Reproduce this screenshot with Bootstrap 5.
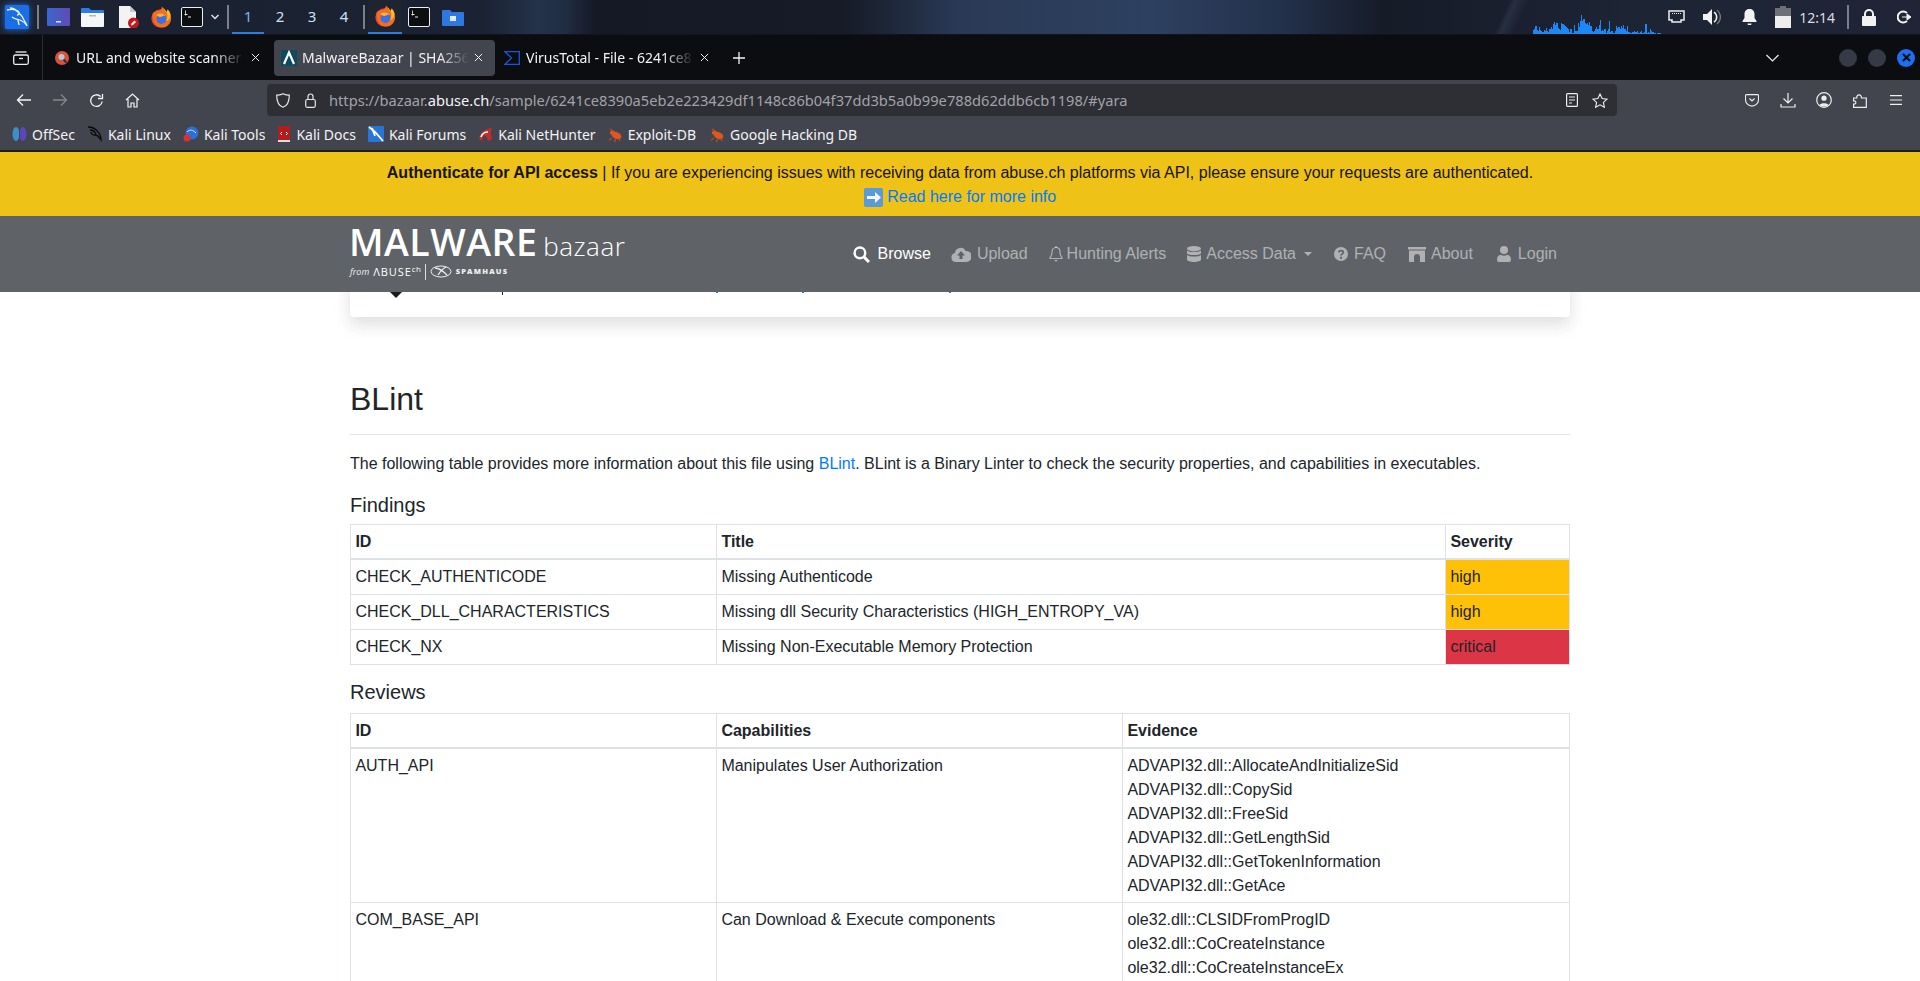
<!DOCTYPE html>
<html lang="en">
<head>
    <meta charset="UTF-8">
    <meta name="viewport" content="width=device-width, initial-scale=1.0">
    <title>MalwareBazaar | SHA256</title>
    <link href="https://cdn.jsdelivr.net/npm/bootstrap@5.3.0/dist/css/bootstrap.min.css" rel="stylesheet">
    <style>
        html, body { height: 100%; }
        body { font-family: "Liberation Sans", Arial, sans-serif; color: #212529; background: #fff; overflow: hidden; }

        /* small left margins for the panel and toolbar icons */
        .lm2 { margin-left: 2px; } .lm3 { margin-left: 3px; } .lm6 { margin-left: 6px; } .lm7 { margin-left: 7px; }
        .lm8 { margin-left: 8px; } .lm9 { margin-left: 9px; } .lm10 { margin-left: 10px; } .lm11 { margin-left: 11px; }
        .lm12 { margin-left: 12px; } .lm13 { margin-left: 13px; } .lm14 { margin-left: 14px; } .lm15 { margin-left: 15px; }
        .lm16 { margin-left: 16px; } .lm18 { margin-left: 18px; } .lm21 { margin-left: 21px; }

        /* desktop panel */
        .xfce-panel { height: 35px; padding-left: 5px; color: #e6e8ec; font-family: "Noto Sans", sans-serif;
            background:
                linear-gradient(115deg, transparent 78%, rgba(120,140,180,.14) 78.3%, transparent 79%),
                linear-gradient(90deg, #1c2230 0, #1a2233 25%, #24324a 28%, #202c42 29.5%, #141925 31%, #161b27 44%, #2a3a56 50%, #2e4060 60%, #22304a 67%, #161b28 72%, #1d2434 85%, #1f2536 100%);
            border-bottom: 1px solid #11141c; }
        .panel-logo { width: 24px; height: 24px; filter: drop-shadow(0 0 3px #1a6fe8); }
        .panel-sep { width: 2px; height: 24px; background: #7b7f87; }
        .panel-end { margin-left: 21px; margin-right: 8px; }
        .ws-item { height: 34px; width: 32px; font-size: 15px; line-height: 33px; text-align: center; color: #cfe0f5; }
        .ws-active { background: #1a2130; border-bottom: 2px solid #2a7de1; color: #7fb2ea; }
        .task-active { width: 34px; height: 34px; border-bottom: 2px solid #2a7de1; background: #1e2430; }
        .panel-clock { font-size: 14px; color: #d6dde6; }
        #netGraph { shape-rendering: crispEdges; }

        /* browser chrome */
        .ff-chrome { font-family: "Noto Sans", sans-serif; color: #f3f3f5; font-size: 14px; flex: none; }
        .ff-tabs { height: 45px; background: #0c0d11; }
        .ff-viewbtn { width: 43px; height: 45px; border-right: 1px solid #2c2d33; }
        .ff-tab { height: 36px; border-radius: 4px; padding: 0 8px; flex: none; width: 221px; }
        .ff-tab-1 { margin-left: 4px; gap: 7px; }
        .ff-tab-2 { background: #42444e; margin-left: 6px; padding: 0 12px 0 7px; gap: 5px; }
        .ff-tab-3 { margin-left: 1px; gap: 6px; }
        .ff-tabtitle { flex: 1; overflow: hidden; white-space: nowrap; min-width: 0;
            -webkit-mask-image: linear-gradient(90deg, #000 82%, transparent); mask-image: linear-gradient(90deg, #000 82%, transparent); }
        .ff-winbtns { gap: 11px; margin: 0 5px 0 60px; }
        .ff-winbtn { width: 18px; height: 18px; border-radius: 50%; background: #363a47; }
        .ff-winclose { background: #1b6ff0; }
        .ff-toolbar { height: 36px; background: #43454e; padding-top: 4px; }
        .ff-btns-left { height: 32px; padding-left: 6px; }
        .ff-btns-right { height: 32px; margin-right: 6px; }
        .ff-btn { width: 36px; display: flex; justify-content: center; }
        .ff-urlbar { width: 1350px; height: 32px; background: #2e2f35; border-radius: 4px; margin-left: 117px; }
        .ff-url { font-size: 14.67px; color: #a2a3a8; white-space: nowrap; }
        .ff-url b { font-weight: 400; color: #f3f3f5; }
        .ff-star { margin: 0 9px 0 14px; }
        .ff-marks { height: 34px; background: #43454e; padding: 2px 0 0 12px; gap: 12px; }
        .ff-mark { gap: 5px; white-space: nowrap; }
        .ff-mark-last { margin-left: 2px; }
        .ff-edge { height: 2px; background: #1c1d21; }

        /* site */
        .api-banner { background: #eec216; color: #15130a; padding: 9px 0 0; height: 64px; }
        .api-banner a { color: #007bff; text-decoration: none; }
        .site-nav { height: 76px; background: #5f6367; position: relative; z-index: 5; }
        .site-wrap { width: 1220px; }
        .logo-link { padding-top: 7px; margin-left: -1px; text-decoration: none; }
        .logo-main { font-family: "Open Sans", sans-serif; color: #fff; line-height: 1; white-space: nowrap; }
        .logo-malware { font-size: 37.5px; font-weight: 600; letter-spacing: .5px; }
        .logo-bazaar { font-size: 26px; font-weight: 300; margin-left: 6px; letter-spacing: .5px; }
        .logo-sub { font-family: "Open Sans", sans-serif; color: #eee; font-size: 9px; line-height: 1; gap: 4px; margin-top: 3px; margin-left: 1px; white-space: nowrap; }
        .logo-abuse { font-size: 11px; letter-spacing: .9px; color: #fff; }
        .logo-ch { font-size: 8px; position: relative; top: -4px; letter-spacing: .6px; }
        .logo-rule { width: 1px; height: 16px; background: #ddd; margin: 0 0 0 -1px; }
        .logo-spam { font-size: 7.5px; font-weight: 800; letter-spacing: 1.2px; }
        .site-links { height: 76px; margin-right: 2px; }
        .site-link { color: rgba(255,255,255,.5); padding: 0 11px; text-decoration: none; gap: 6px; white-space: nowrap; }
        .site-link-on { color: #fff; gap: 8px; }
        .link-upload { margin-left: -2px; }
        .link-alerts { gap: 4px; margin-left: -1px; }
        .link-access { gap: 5px; margin-left: -1px; }
        .link-about { gap: 5px; }
        .link-login { gap: 7px; margin-left: 2px; }
        .drop-tip { width: 0; height: 0; border-left: 4.5px solid transparent; border-right: 4.5px solid transparent; border-top: 4.5px solid rgba(255,255,255,.5); margin-left: 3px; }
        .stub-card { height: 45px; margin-top: -20px; border-radius: 4px; }
        .stub-bits { position: absolute; left: 0; bottom: 19px; }
        .blint-title { font-size: 32px; line-height: 38.4px; font-weight: 400; margin: 63px 0 16px; }
        .blint-rule { margin: 0 0 17px; border-top: 1px solid #000; opacity: .1; }
        .blint-intro a { color: #007bff; text-decoration: none; }
        .blint-intro { margin-bottom: 17px; }
        .blint-sub { font-size: 20px; line-height: 24px; font-weight: 400; margin-bottom: 7px; }
        .blint-sub-2 { margin-bottom: 9px; }
        .bz-table { table-layout: fixed; width: 1220px; color: #212529; margin-bottom: 15px; }
        .bz-table th, .bz-table td { padding: 5px 4.4px; line-height: 24px; border-color: #dee2e6; }
        .bz-table thead th { border-bottom: 2px solid #dee2e6; padding-bottom: 4px; }
        .bz-table .rev-tight td { padding-bottom: 4px; }
        .bz-table .rev-open td { padding-bottom: 40px; }
        .col-id { width: 366px; }
        .col-title { width: 729px; }
        .col-cap { width: 406px; }
    </style>
</head>
<body class="d-flex flex-column">
    <svg width="0" height="0" class="position-absolute">
        <defs>
            <symbol id="ico-firefox" viewBox="0 0 24 24">
                <circle cx="11.5" cy="13" r="10" fill="#e8452f"/>
                <path d="M3 7C2 13 5 23 13 23c6 0 10-5 10-10 0-4-1-7-3-9 0 2-1 3-2 3-1-3-3-5-5-7 0 3-2 4-3 5-2-1-3 0-3 0z" fill="#f36f1e"/>
                <path d="M14 1c2 2 5 5 5 9 0 3-1 5-3 7 4-1 7-5 6-9-1-3-2-4-3-5 0 2-1 3-2 3-1-2-2-4-3-5z" fill="#fdbb2d"/>
                <circle cx="12.5" cy="13.5" r="5.5" fill="#3f6fe0"/>
                <path d="M7 9c3-2 7-2 10 1-2 0-3 0-4 1-2 1-5 0-6-2z" fill="#fbb03b"/>
            </symbol>
            <symbol id="ico-term" viewBox="0 0 22 20">
                <rect x=".5" y=".5" width="21" height="19" rx="1.5" fill="#0d0e10" stroke="#eee"/>
                <path d="M3.500 7.500h3M7 10h3" stroke="#eee" stroke-width="1" fill="none"/>
                <path d="M4.500 3.500v5" stroke="#eee" stroke-width=".8"/>
            </symbol>
            <symbol id="ico-bug" viewBox="0 0 16 16">
                <ellipse cx="9" cy="9" rx="5.500" ry="3.600" transform="rotate(25 9 9)" fill="#e2561d"/>
                <path d="M2 2l6 4M4 12L1 14M8 13l-1 3M12 13l1 2" stroke="#e2561d" stroke-width="1" fill="none"/>
                <circle cx="4" cy="6" r="2" fill="#e2561d"/>
            </symbol>
            <symbol id="ico-x" viewBox="0 0 10 10">
                <path d="M1 1l8 8M9 1L1 9" stroke="#f3f3f5" stroke-width="1.100" fill="none"/>
            </symbol>
        </defs>
    </svg>

    <!-- top panel -->
    <div class="xfce-panel d-flex align-items-center flex-none">
        <svg class="panel-logo" viewBox="0 0 24 24"><rect width="24" height="24" rx="1.500" fill="#1a6fe8"/><path d="M2 5c4-1 8-1 11 1 2 2 1 4-1 4M5 3c2 0 5 1 8 4 3 3 4 3 6 8 1 2 2 3 3 6-2-3-4-5-7-6-3-1-6-1-8-3M13 15c0 2 1 3 1 5" fill="none" stroke="#eef5ff" stroke-width="1.300"/></svg>
        <span class="panel-sep ms-2"></span>
        <svg class="ms-2" width="23" height="18" viewBox="0 0 23 18"><defs><linearGradient id="gd" x1="0" x2="1"><stop offset="0" stop-color="#3b66cf"/><stop offset="1" stop-color="#5f4bb3"/></linearGradient></defs><rect width="23" height="18" rx="1" fill="url(#gd)"/><rect x="9" y="13" width="5" height="1.500" fill="#dfe6ff"/></svg>
        <svg class="lm11" width="23" height="20" viewBox="0 0 23 20"><path d="M0 2a1 1 0 0 1 1-1h7l2 2h12a1 1 0 0 1 1 1v3H0z" fill="#2e7be6"/><path d="M0 6h23v13a1 1 0 0 1-1 1H1a1 1 0 0 1-1-1z" fill="#f5f6f7"/><rect x="8" y="8" width="7" height="1.500" fill="#b5b8bd"/></svg>
        <svg class="lm14" width="22" height="22" viewBox="0 0 22 22"><path d="M1 0h11l6 6v16H1z" fill="#f3f3f3"/><path d="M12 0l6 6h-6z" fill="#c9c9c9"/><circle cx="15.500" cy="17" r="5.500" fill="#c8161d"/><path d="M13 19.500l.5-2 3-3 1.500 1.500-3 3z" fill="#fff"/></svg>
        <svg class="lm10" width="22" height="23"><use href="#ico-firefox"/></svg>
        <svg class="lm9" width="22" height="20"><use href="#ico-term"/></svg>
        <svg class="lm8" width="8" height="6" viewBox="0 0 8 6"><path d="M.5 1L4 4.500 7.500 1" fill="none" stroke="#e5e5e5" stroke-width="1.500"/></svg>
        <span class="panel-sep lm8"></span>
        <div class="ws-item ws-active lm3">1</div>
        <div class="ws-item">2</div>
        <div class="ws-item">3</div>
        <div class="ws-item">4</div>
        <span class="panel-sep lm3"></span>
        <div class="task-active d-flex align-items-center justify-content-center lm3"><svg width="22" height="23"><use href="#ico-firefox"/></svg></div>
        <svg class="lm6" width="22" height="20"><use href="#ico-term"/></svg>
        <svg class="lm12" width="22" height="17" viewBox="0 0 22 17"><path d="M0 2a1 1 0 0 1 1-1h7l2 2h11a1 1 0 0 1 1 1v12a1 1 0 0 1-1 1H1a1 1 0 0 1-1-1z" fill="#2f78e0"/><rect x="8" y="7" width="6" height="5" fill="#dfeaff"/></svg>

        <div class="ms-auto d-flex align-items-center">
            <svg id="netGraph" width="129" height="34" viewBox="0 0 129 34"><path id="netPath" fill="#1f86f5" d=""/></svg>
            <svg class="lm6" width="17" height="14" viewBox="0 0 17 14"><path d="M1 1h15v9h-3v2H4v-2H1z" fill="none" stroke="#eee" stroke-width="1.500"/><path d="M4 3.500h9" stroke="#eee" stroke-dasharray="1 1"/></svg>
            <svg class="lm18" width="18" height="16" viewBox="0 0 18 16"><path d="M0 5h4l5-5v16l-5-5H0z" fill="#f2f2f2"/><path d="M11 3a6 6 0 0 1 0 10" fill="none" stroke="#f2f2f2" stroke-width="1.500"/><path d="M14 1a9 9 0 0 1 0 14" fill="none" stroke="#777" stroke-width="1.500"/></svg>
            <svg class="lm21" width="15" height="16" viewBox="0 0 15 16"><path d="M7.500 0c3 0 5 2 5 5v4l2 3v1H.5v-1l2-3V5c0-3 2-5 5-5z" fill="#f2f2f2"/><path d="M5.500 14.500h4a2 2 0 0 1-4 0z" fill="#f2f2f2"/></svg>
            <svg class="lm18" width="16" height="22" viewBox="0 0 16 22"><path d="M5 0h6v2h5v8H0V2h5z" fill="#6d7078"/><path d="M0 10h16v12H0z" fill="#eeeeec"/></svg>
            <span class="panel-clock lm8">12:14</span>
            <span class="panel-sep lm12"></span>
            <svg class="lm13" width="14" height="17" viewBox="0 0 14 17"><path d="M3 8V5a4 4 0 0 1 8 0v3" fill="none" stroke="#f2f2f2" stroke-width="2"/><rect y="7" width="14" height="10" rx="1" fill="#f2f2f2"/></svg>
            <svg class="panel-end" width="15" height="14" viewBox="0 0 15 14"><path d="M10 3a5.500 5.500 0 1 0 0 8" fill="none" stroke="#f2f2f2" stroke-width="2"/><path d="M5 7h7M10 4l4 3-4 3z" fill="#f2f2f2" stroke="#f2f2f2"/></svg>
        </div>
    </div>

    <!-- firefox -->
    <div class="ff-chrome">
        <div class="ff-tabs d-flex align-items-center">
            <div class="ff-viewbtn d-flex align-items-center justify-content-center">
                <svg width="16" height="14" viewBox="0 0 16 14"><rect x=".7" y="4" width="14.600" height="9.300" rx="1.500" fill="none" stroke="#eee" stroke-width="1.300"/><path d="M2.500 1h11" stroke="#eee" stroke-width="1.300"/><path d="M6 7.500h4" stroke="#eee" stroke-width="1.300"/></svg>
            </div>
            <div class="ff-tab ff-tab-1 d-flex align-items-center">
                <svg width="14" height="14" viewBox="0 0 14 14"><circle cx="7" cy="7" r="7" fill="#d8523c"/><circle cx="6.500" cy="6" r="3" fill="#b9c6d8"/><path d="M8.500 8.500l3 3" stroke="#22304a" stroke-width="2"/></svg>
                <span class="ff-tabtitle">URL and website scanner</span>
                <svg width="9" height="9"><use href="#ico-x"/></svg>
            </div>
            <div class="ff-tab ff-tab-2 d-flex align-items-center">
                <svg width="16" height="16" viewBox="0 0 16 16"><rect width="16" height="16" fill="#0f4a5e"/><path d="M3 14L8 2.500 13 14" fill="none" stroke="#fff" stroke-width="2.200"/></svg>
                <span class="ff-tabtitle">MalwareBazaar | SHA256</span>
                <svg width="9" height="9"><use href="#ico-x"/></svg>
            </div>
            <div class="ff-tab ff-tab-3 d-flex align-items-center">
                <svg width="16" height="14" viewBox="0 0 16 14"><path d="M1 .7h14.300v12.600H1L7.500 7z" fill="none" stroke="#1a56d8" stroke-width="1.300"/></svg>
                <span class="ff-tabtitle">VirusTotal - File - 6241ce8</span>
                <svg width="9" height="9"><use href="#ico-x"/></svg>
            </div>
            <svg class="lm16" width="12" height="12" viewBox="0 0 12 12"><path d="M6 0v12M0 6h12" stroke="#f3f3f5" stroke-width="1.300"/></svg>
            <svg class="ms-auto" width="13" height="8" viewBox="0 0 13 8"><path d="M.5 1l6 6 6-6" fill="none" stroke="#eee" stroke-width="1.200"/></svg>
            <div class="d-flex align-items-center ff-winbtns">
                <span class="ff-winbtn"></span><span class="ff-winbtn"></span>
                <span class="ff-winbtn ff-winclose d-flex align-items-center justify-content-center"><svg width="9" height="9" viewBox="0 0 10 10"><path d="M1 1l8 8M9 1L1 9" stroke="#0b0d12" stroke-width="2.400"/></svg></span>
            </div>
        </div>
        <div class="ff-toolbar d-flex align-items-start">
            <div class="d-flex align-items-center ff-btns-left">
                <div class="ff-btn"><svg width="16" height="14" viewBox="0 0 16 14"><path d="M15 7H1.500M7 1.500L1.500 7 7 12.500" fill="none" stroke="#f3f3f5" stroke-width="1.300"/></svg></div>
                <div class="ff-btn"><svg width="16" height="14" viewBox="0 0 16 14"><path d="M1 7h13.500M9 1.500L14.500 7 9 12.500" fill="none" stroke="#85868c" stroke-width="1.300"/></svg></div>
                <div class="ff-btn"><svg width="15" height="15" viewBox="0 0 15 15"><path d="M13.200 8.500A5.800 5.800 0 1 1 11.600 3.500M13.500 1v4.500H9" fill="none" stroke="#f3f3f5" stroke-width="1.300"/></svg></div>
                <div class="ff-btn"><svg width="15" height="15" viewBox="0 0 15 15"><path d="M1 7L7.500 1 14 7M3 6v8h3v-4h3v4h3V6" fill="none" stroke="#f3f3f5" stroke-width="1.200"/></svg></div>
            </div>
            <div class="ff-urlbar d-flex align-items-center">
                <svg class="lm9" width="14" height="15" viewBox="0 0 14 15"><path d="M7 .7c2 1 4 1.500 6.300 1.500 0 6-2 10.500-6.300 12.100C2.700 12.700.7 8.200.7 2.200 3 2.200 5 1.700 7 .7z" fill="none" stroke="#e5e5e8" stroke-width="1.200"/></svg>
                <svg class="lm15" width="11" height="15" viewBox="0 0 11 15"><rect x=".7" y="6.500" width="9.600" height="7.800" rx="1.500" fill="none" stroke="#e5e5e8" stroke-width="1.200"/><path d="M3 6.500V3.500a2.500 2.500 0 0 1 5 0v3" fill="none" stroke="#e5e5e8" stroke-width="1.200"/></svg>
                <span class="ff-url lm13">https://bazaar.<b>abuse.ch</b>/sample/6241ce8390a5eb2e223429df1148c86b04f37dd3b5a0b99e788d62ddb6cb1198/#yara</span>
                <svg class="ms-auto" width="12" height="14" viewBox="0 0 12 14"><rect x=".6" y=".6" width="10.800" height="12.800" rx="1" fill="none" stroke="#eee" stroke-width="1.200"/><path d="M3 4h6M3 7h6M3 10h3" stroke="#eee"/></svg>
                <svg class="ff-star" width="16" height="15" viewBox="0 0 16 15"><path d="M8 1l2.100 4.600 5 .5-3.700 3.300 1 4.900L8 11.800l-4.400 2.500 1-4.900L.9 6.100l5-.5z" fill="none" stroke="#eee" stroke-width="1.100"/></svg>
            </div>
            <div class="d-flex align-items-center ms-auto ff-btns-right">
                <div class="ff-btn"><svg width="14" height="13" viewBox="0 0 14 13"><path d="M1.500.6h11a1 1 0 0 1 1 1v4a6.500 6.500 0 0 1-13 0v-4a1 1 0 0 1 1-1z" fill="none" stroke="#eee" stroke-width="1.100"/><path d="M4.500 4.500L7 7l2.500-2.500" fill="none" stroke="#eee" stroke-width="1.200"/></svg></div>
                <div class="ff-btn"><svg width="16" height="15" viewBox="0 0 16 15"><path d="M8 0v10M3.500 5.500L8 10l4.500-4.500M1 11v3h14v-3" fill="none" stroke="#eee" stroke-width="1.200"/></svg></div>
                <div class="ff-btn"><svg width="16" height="16" viewBox="0 0 16 16"><circle cx="8" cy="8" r="7.300" fill="none" stroke="#eee" stroke-width="1.200"/><circle cx="8" cy="6.200" r="2.600" fill="#eee"/><path d="M3.500 13c1-2.500 8-2.500 9 0-2 2-7 2-9 0z" fill="#eee"/></svg></div>
                <div class="ff-btn"><svg width="14" height="16" viewBox="0 0 14 16"><path d="M.6 6h3.200c-.6-4 5-4.500 4.600 0h4.900v9.400H.6v-3.400c3 .6 3-3.600 0-3z" fill="none" stroke="#eee" stroke-width="1.200"/></svg></div>
                <div class="ff-btn"><svg width="12" height="10" viewBox="0 0 12 10"><path d="M0 .7h12M0 5h12M0 9.300h12" stroke="#eee" stroke-width="1.200"/></svg></div>
            </div>
        </div>
        <div class="ff-marks d-flex align-items-center">
            <div class="ff-mark d-flex align-items-center"><svg width="15" height="16" viewBox="0 0 15 16"><ellipse cx="4" cy="8" rx="3.500" ry="7" fill="#3d8fc8"/><ellipse cx="11" cy="8" rx="3.500" ry="7" fill="#5c46c0"/><path d="M7.500 1v14" stroke="#43454e"/></svg>OffSec</div>
            <div class="ff-mark d-flex align-items-center"><svg width="16" height="16" viewBox="0 0 16 16"><path d="M1 1c5 0 8 2 10 5 2 2 3 4 3 8-2-3-3-5-6-5-2 0-4-1-4-3M3 4c3 0 5 2 6 4" fill="none" stroke="#0a0a0a" stroke-width="1.300"/></svg>Kali Linux</div>
            <div class="ff-mark d-flex align-items-center"><svg width="16" height="16" viewBox="0 0 16 16"><circle cx="9" cy="7" r="6.500" fill="#2d6fd6"/><path d="M4 6c3-3 6-2 9 1" fill="none" stroke="#cfe2ff"/><circle cx="4" cy="12" r="3.500" fill="#d6332b"/></svg>Kali Tools</div>
            <div class="ff-mark d-flex align-items-center"><svg width="14" height="16" viewBox="0 0 14 16"><rect x="1" width="12" height="15" fill="#b31d1d"/><rect x="1" y="14" width="12" height="2" fill="#ddd"/><path d="M5 6L3.500 7.500 5 9M9 6l1.500 1.500L9 9" stroke="#fff" fill="none"/></svg>Kali Docs</div>
            <div class="ff-mark d-flex align-items-center"><svg width="16" height="16" viewBox="0 0 16 16"><rect width="16" height="16" rx="1" fill="#2a74d6"/><path d="M1 1l6 5 8 9M4 2l3 8" stroke="#fff" stroke-width="1.800" fill="none"/></svg>Kali Forums</div>
            <div class="ff-mark d-flex align-items-center"><svg width="15" height="16" viewBox="0 0 15 16"><path d="M1 13C2 6 7 3 14 2c-2 4-1 7 0 11l-4 2C9 11 8 9 5 10l-1 5z" fill="#c92a2a"/><path d="M3 11c1-3 4-5 7-5" stroke="#fff" stroke-width="1.600" fill="none"/></svg>Kali NetHunter</div>
            <div class="ff-mark d-flex align-items-center"><svg width="15" height="15"><use href="#ico-bug"/></svg>Exploit-DB</div>
            <div class="ff-mark ff-mark-last d-flex align-items-center"><svg width="15" height="15"><use href="#ico-bug"/></svg>Google Hacking DB</div>
        </div>
        <div class="ff-edge"></div>
    </div>

    <!-- page -->
    <div class="flex-grow-1 overflow-hidden">
        <div class="api-banner text-center">
            <strong>Authenticate for API access</strong> | If you are experiencing issues with receiving data from abuse.ch platforms via API, please ensure your requests are authenticated.<br>
            <a href="#"><svg width="19" height="19" viewBox="0 0 19 19" class="align-text-top"><rect width="19" height="19" rx="2" fill="#5a9ad6"/><path d="M3 8h8V4l6 5.500L11 15v-4H3z" fill="#f4f7fa"/></svg> Read here for more info</a>
        </div>
        <nav class="site-nav d-flex justify-content-center">
            <div class="site-wrap d-flex align-items-start justify-content-between">
                <a href="#" class="logo-link">
                    <div class="logo-main"><span class="logo-malware">MALWARE</span><span class="logo-bazaar">bazaar</span></div>
                    <div class="logo-sub d-flex align-items-center">
                        <em>from</em><span class="logo-abuse">ΛBUSE<span class="logo-ch">ch</span></span>
                        <span class="logo-rule"></span>
                        <svg width="22" height="13" viewBox="0 0 22 13"><ellipse cx="11" cy="6.500" rx="10" ry="5.500" fill="none" stroke="#eee"/><path d="M5 3c4 0 8 3 12 7M8 10c2-3 5-7 8-8" stroke="#eee" stroke-width="1.300" fill="none"/></svg>
                        <span class="logo-spam">SPAMHAUS</span>
                    </div>
                </a>
                <div class="d-flex align-items-center site-links">
                    <a class="site-link site-link-on d-flex align-items-center" href="#"><svg width="17" height="17" viewBox="0 0 16 16"><circle cx="6.500" cy="6.500" r="5" fill="none" stroke="#fff" stroke-width="2.300"/><path d="M10.500 10.500L15 15" stroke="#fff" stroke-width="2.800"/></svg>Browse</a>
                    <a class="site-link link-upload d-flex align-items-center" href="#"><svg width="20" height="15" viewBox="0 0 20 15" fill="rgba(255,255,255,.5)"><path fill-rule="evenodd" d="M5 15a4.500 4.500 0 0 1-1-8.900A5.500 5.500 0 0 1 14.500 4 5.500 5.500 0 0 1 16 15zM10 4L6 8.500h2.500V12h3V8.500H14z"/></svg>Upload</a>
                    <a class="site-link link-alerts d-flex align-items-center" href="#"><svg width="14" height="16" viewBox="0 0 14 16"><path d="M7 1.500c2.500 0 4 2 4 4.500 0 3 1 4.500 2 5.500v1H1v-1c1-1 2-2.500 2-5.500 0-2.500 1.500-4.500 4-4.500z" fill="none" stroke="rgba(255,255,255,.5)" stroke-width="1.200"/><path d="M5.500 14h3a1.500 1.500 0 0 1-3 0zM6.300 0h1.400v2H6.300z" fill="rgba(255,255,255,.5)"/></svg>Hunting Alerts</a>
                    <a class="site-link link-access d-flex align-items-center" href="#"><svg width="14" height="16" viewBox="0 0 14 16" fill="rgba(255,255,255,.5)"><ellipse cx="7" cy="2.700" rx="7" ry="2.700"/><path d="M0 4.500c2 2 12 2 14 0v3c-2 2-12 2-14 0zM0 9c2 2 12 2 14 0v4.300c0 3.600-14 3.600-14 0z"/></svg>Access Data<span class="drop-tip"></span></a>
                    <a class="site-link d-flex align-items-center" href="#"><svg width="14" height="14" viewBox="0 0 14 14"><circle cx="7" cy="7" r="7" fill="rgba(255,255,255,.5)"/><path d="M4.800 5.300C5 3.200 9.300 3 9.300 5.300 9.300 7 7 6.800 7 8.600" fill="none" stroke="#5f6367" stroke-width="1.700"/><path d="M6 9.800h2v1.900H6z" fill="#5f6367"/></svg>FAQ</a>
                    <a class="site-link link-about d-flex align-items-center" href="#"><svg width="18" height="15" viewBox="0 0 18 15" fill="rgba(255,255,255,.5)"><path d="M0 0h18v2.500H0zM1 3.500h16V15h-5V10a3 3 0 0 0-6 0v5H1z"/></svg>About</a>
                    <a class="site-link link-login d-flex align-items-center" href="#"><svg width="14" height="16" viewBox="0 0 14 16" fill="rgba(255,255,255,.5)"><circle cx="7" cy="4" r="4"/><path d="M0 14c0-4 2-5 4-5 2 1 4 1 6 0 2 0 4 1 4 5 0 1.200-.8 2-2 2H2c-1.200 0-2-.8-2-2z"/></svg>Login</a>
                </div>
            </div>
        </nav>
        <main class="site-wrap mx-auto">
            <div class="card stub-card border-0 shadow position-relative">
                <svg class="stub-bits" width="1220" height="6" viewBox="0 0 1220 6"><path d="M40 0h12l-4 4-2 2-2-2z" fill="#1a1a1a"/><rect x="152" y="0" width="1" height="3" fill="#222"/><rect x="366" y="0" width="2" height="1" fill="#007bff"/><rect x="452" y="0" width="2" height="1" fill="#007bff"/><rect x="599" y="0" width="2" height="1" fill="#007bff"/></svg>
            </div>
            <h2 class="blint-title">BLint</h2>
            <hr class="blint-rule">
            <p class="blint-intro">The following table provides more information about this file using <a href="#">BLint</a>. BLint is a Binary Linter to check the security properties, and capabilities in executables.</p>
            <h5 class="blint-sub">Findings</h5>
            <table class="table table-bordered bz-table">
                <colgroup><col class="col-id"><col class="col-title"><col></colgroup>
                <thead><tr><th>ID</th><th>Title</th><th>Severity</th></tr></thead>
                <tbody>
                    <tr><td>CHECK_AUTHENTICODE</td><td>Missing Authenticode</td><td class="bg-warning">high</td></tr>
                    <tr><td>CHECK_DLL_CHARACTERISTICS</td><td>Missing dll Security Characteristics (HIGH_ENTROPY_VA)</td><td class="bg-warning">high</td></tr>
                    <tr><td>CHECK_NX</td><td>Missing Non-Executable Memory Protection</td><td class="bg-danger">critical</td></tr>
                </tbody>
            </table>
            <h5 class="blint-sub blint-sub-2">Reviews</h5>
            <table class="table table-bordered bz-table">
                <colgroup><col class="col-id"><col class="col-cap"><col></colgroup>
                <thead><tr><th>ID</th><th>Capabilities</th><th>Evidence</th></tr></thead>
                <tbody>
                    <tr class="rev-tight"><td>AUTH_API</td><td>Manipulates User Authorization</td>
                        <td>ADVAPI32.dll::AllocateAndInitializeSid<br>ADVAPI32.dll::CopySid<br>ADVAPI32.dll::FreeSid<br>ADVAPI32.dll::GetLengthSid<br>ADVAPI32.dll::GetTokenInformation<br>ADVAPI32.dll::GetAce</td></tr>
                    <tr class="rev-open"><td>COM_BASE_API</td><td>Can Download &amp; Execute components</td>
                        <td>ole32.dll::CLSIDFromProgID<br>ole32.dll::CoCreateInstance<br>ole32.dll::CoCreateInstanceEx</td></tr>
                </tbody>
            </table>
        </main>
    </div>

    <script src="https://cdn.jsdelivr.net/npm/bootstrap@5.3.0/dist/js/bootstrap.bundle.min.js"></script>
    <script>
        // network load graph in the panel
        var netLoad = [4,5,8,4,3,7,4,3,2,4,3,6,3,2,5,7,5,10,12,9,11,6,5,4,11,10,9,8,7,6,5,2,5,1,1,9,3,3,11,7,13,19,13,15,11,10,11,9,12,8,3,2,3,5,7,5,9,14,3,4,3,5,1,3,5,13,2,3,1,1,3,8,6,7,5,8,6,9,5,3,8,2,2,1,1,2,3,2,2,3,1,2,3,1,1,2,10,1,2,1,5,3,2,1,1,0,1,1,1];
        var d = '';
        netLoad.forEach(function (h, i) {
            if (h > 0) d += 'M' + (i * 1.17).toFixed(1) + ' 34h1.2v-' + h + 'h-1.2z';
        });
        document.getElementById('netPath').setAttribute('d', d);
    </script>
</body>
</html>
